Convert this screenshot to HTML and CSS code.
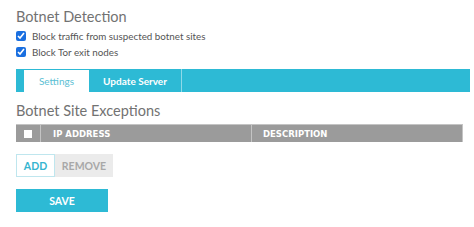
FILE: index.html
```html
<html>
  <head>
    <title>Botnet Detection</title>
    <link rel="stylesheet" href="styles.css">
  </head>
  <body>
    <div class="page">
      <h2 class="sectionTitle">Botnet Detection</h2>
      <label class="checkRow">
        <input type="checkbox" checked />
        <span>Block traffic from suspected botnet sites</span>
      </label>
      <label class="checkRow">
        <input type="checkbox" checked />
        <span>Block Tor exit nodes</span>
      </label>

      <div class="tabBar">
        <div class="tab activeTab">Settings</div>
        <div class="tab">Update Server</div>
      </div>

      <h2 class="sectionTitle subTitle">Botnet Site Exceptions</h2>
      <div class="tableHead">
        <div class="colCheck"><span class="box"></span></div>
        <div class="colIp">IP ADDRESS</div>
        <div class="colDesc">DESCRIPTION</div>
      </div>

      <div class="btnGroup">
        <button type="button" class="addbtn">ADD</button>
        <button type="button" class="removebtn">REMOVE</button>
      </div>
      <button type="button" class="savebtn">SAVE</button>
    </div>
  </body>
</html>
```

FILE: styles.css
```css
body {
  margin: 0;
  background-color: #ffffff;
  font-family: Lato, "Open Sans", Arial, sans-serif;
}

.page {
  padding: 6px 0 0 16px;
}

.sectionTitle {
  margin: 0;
  font-size: 14.5px;
  line-height: 22px;
  font-weight: normal;
  color: #727272;
}

.checkRow {
  display: flex;
  align-items: center;
  height: 16px;
  font-size: 9.8px;
  color: #555555;
}
.checkRow input {
  margin: 0 6px 0 0;
  width: 10px;
  height: 10px;
  accent-color: #1a6fe0;
}

.tabBar {
  display: flex;
  margin-top: 9px;
  width: 454px;
  height: 23px;
  padding-left: 8px;
  box-sizing: border-box;
  background-color: #2dbad5;
}
.tab {
  display: flex;
  align-items: center;
  justify-content: center;
  font-size: 10px;
  color: #ffffff;
  font-weight: bold;
  width: 92px;
  border-right: 1px solid #8fd9e8;
}
.activeTab {
  width: 65px;
  margin-top: 1px;
  background-color: #ffffff;
  color: #5cc0d4;
  font-weight: normal;
  border-right: none;
}

.subTitle {
  margin-top: 9px;
  line-height: 20px;
}

.tableHead {
  display: flex;
  margin-top: 3px;
  width: 447px;
  height: 18px;
  box-sizing: border-box;
  background-color: #9b9b9b;
  border-top: 1px solid #c4c4c4;
  border-right: 1px solid #c4c4c4;
  font-family: "DejaVu Sans", Verdana, sans-serif;
  font-size: 8.5px;
  font-weight: bold;
  color: #ffffff;
}
.tableHead div {
  display: flex;
  align-items: center;
}
.colCheck {
  width: 24px;
  justify-content: center;
  border-right: 1px solid #c4c4c4;
}
.box {
  width: 8px;
  height: 8px;
  background-color: #ffffff;
}
.colIp {
  width: 211px;
  padding-left: 12px;
  box-sizing: border-box;
  border-right: 1px solid #c4c4c4;
}
.colDesc {
  padding-left: 11px;
}

.btnGroup {
  display: flex;
  margin-top: 12px;
}
button {
  font-family: Lato, "Open Sans", Arial, sans-serif;
  font-weight: bold;
  font-size: 10.5px;
  margin: 0;
  padding: 0;
  cursor: pointer;
}
.addbtn {
  width: 39px;
  height: 23px;
  background-color: #ffffff;
  border: 1px solid #bfe6ee;
  color: #35b4cf;
}
.removebtn {
  width: 58px;
  height: 23px;
  background-color: #ebebeb;
  border: 1px solid #ebebeb;
  color: #a8a8a8;
}
.savebtn {
  display: block;
  margin-top: 12px;
  width: 92px;
  height: 23px;
  border: none;
  background-color: #2dbad5;
  color: #ffffff;
}
```
